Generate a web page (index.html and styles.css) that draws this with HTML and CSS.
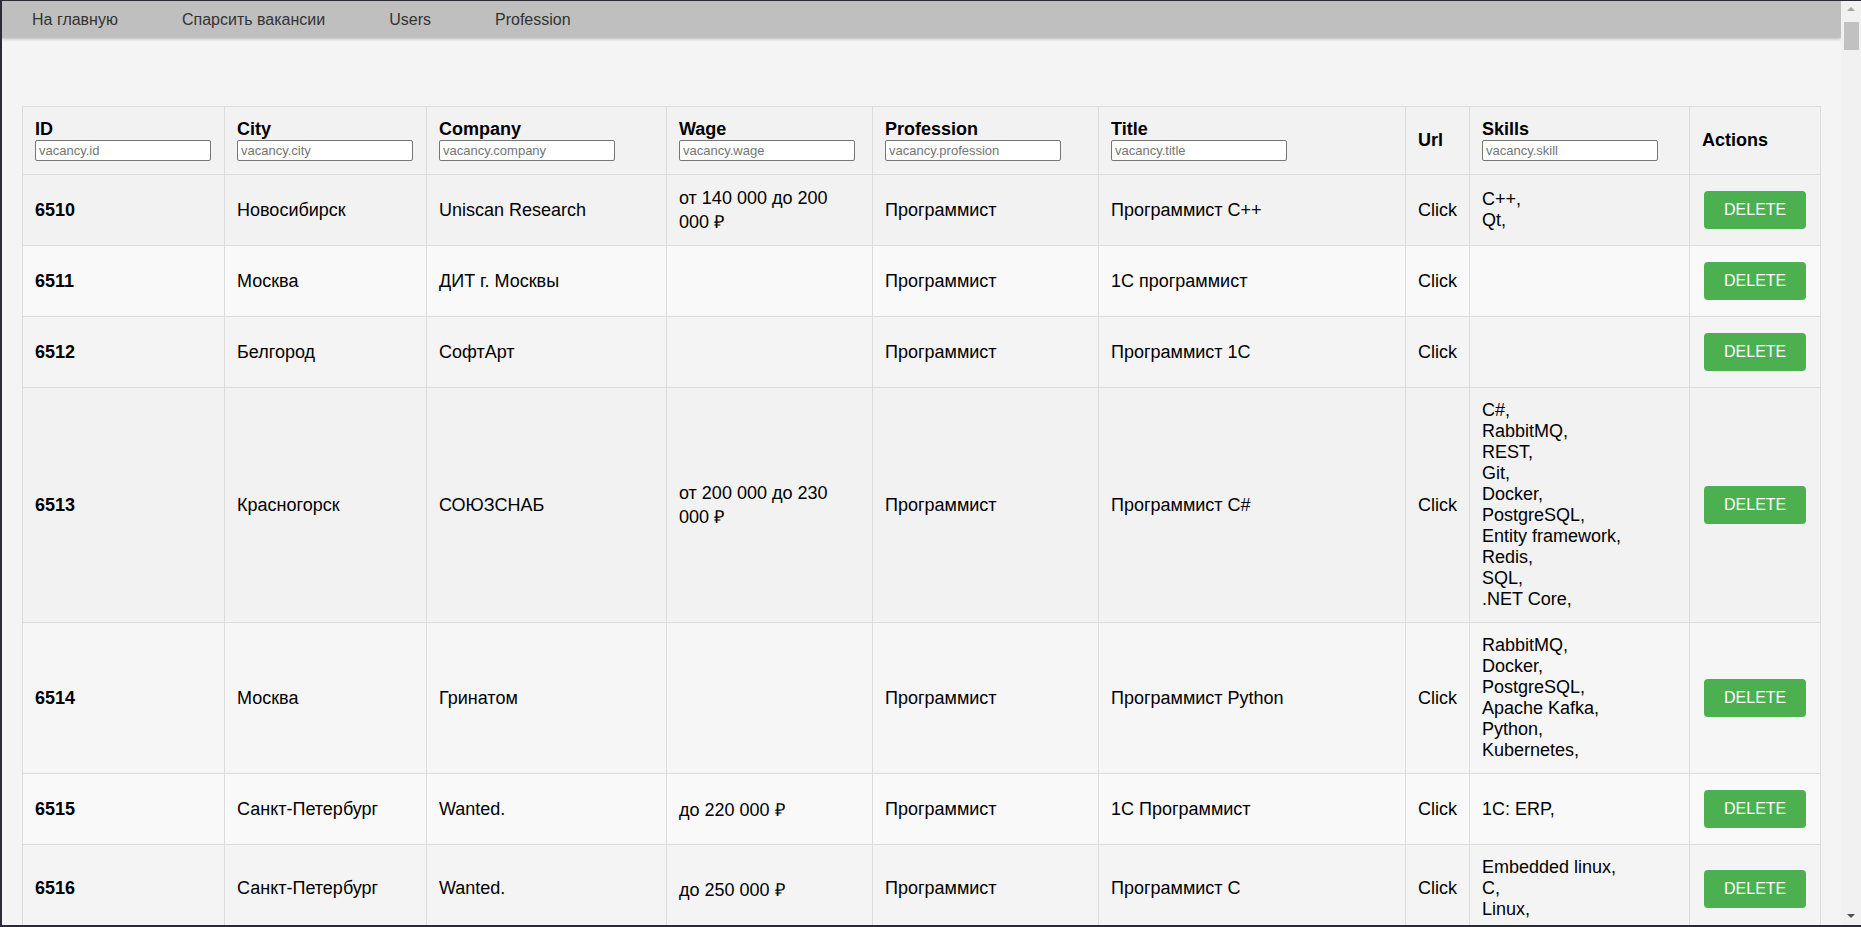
FILE: index.html
```html
<!DOCTYPE html>
<html lang="ru">
<head>
<meta charset="utf-8">
<title>Vacancies</title>
<link rel="stylesheet" href="styles.css">
</head>
<body>
<div class="frame">
  <div class="page">
    <nav class="nav">
      <a class="nav-link" href="#">На главную</a>
      <a class="nav-link" href="#">Спарсить вакансии</a>
      <a class="nav-link" href="#">Users</a>
      <a class="nav-link" href="#">Profession</a>
    </nav>
    <main class="content">
      <table class="grid">
        <colgroup>
          <col class="c-id"><col class="c-city"><col class="c-company"><col class="c-wage"><col class="c-prof"><col class="c-title"><col class="c-url"><col class="c-skills"><col class="c-actions">
        </colgroup>
        <thead>
          <tr>
            <th><div>ID</div><input class="filter" placeholder="vacancy.id"></th>
            <th><div>City</div><input class="filter" placeholder="vacancy.city"></th>
            <th><div>Company</div><input class="filter" placeholder="vacancy.company"></th>
            <th><div>Wage</div><input class="filter" placeholder="vacancy.wage"></th>
            <th><div>Profession</div><input class="filter" placeholder="vacancy.profession"></th>
            <th><div>Title</div><input class="filter" placeholder="vacancy.title"></th>
            <th>Url</th>
            <th><div>Skills</div><input class="filter" placeholder="vacancy.skill"></th>
            <th>Actions</th>
          </tr>
        </thead>
        <tbody>
          <tr class="r1">
            <td class="id">6510</td><td>Новосибирск</td><td>Uniscan Research</td><td class="wage">от 140 000 до 200 000 ₽</td><td>Программист</td><td>Программист C++</td><td><a class="url" href="#">Click</a></td>
            <td><span class="skill">C++,</span><span class="skill">Qt,</span></td>
            <td><button class="del">DELETE</button></td>
          </tr>
          <tr class="r2">
            <td class="id">6511</td><td>Москва</td><td>ДИТ г. Москвы</td><td class="wage"></td><td>Программист</td><td>1С программист</td><td><a class="url" href="#">Click</a></td>
            <td></td>
            <td><button class="del">DELETE</button></td>
          </tr>
          <tr class="r3">
            <td class="id">6512</td><td>Белгород</td><td>СофтАрт</td><td class="wage"></td><td>Программист</td><td>Программист 1С</td><td><a class="url" href="#">Click</a></td>
            <td></td>
            <td><button class="del">DELETE</button></td>
          </tr>
          <tr class="r4">
            <td class="id">6513</td><td>Красногорск</td><td>СОЮЗСНАБ</td><td class="wage">от 200 000 до 230 000 ₽</td><td>Программист</td><td>Программист C#</td><td><a class="url" href="#">Click</a></td>
            <td><span class="skill">C#,</span><span class="skill">RabbitMQ,</span><span class="skill">REST,</span><span class="skill">Git,</span><span class="skill">Docker,</span><span class="skill">PostgreSQL,</span><span class="skill">Entity framework,</span><span class="skill">Redis,</span><span class="skill">SQL,</span><span class="skill">.NET Core,</span></td>
            <td><button class="del">DELETE</button></td>
          </tr>
          <tr class="r5">
            <td class="id">6514</td><td>Москва</td><td>Гринатом</td><td class="wage"></td><td>Программист</td><td>Программист Python</td><td><a class="url" href="#">Click</a></td>
            <td><span class="skill">RabbitMQ,</span><span class="skill">Docker,</span><span class="skill">PostgreSQL,</span><span class="skill">Apache Kafka,</span><span class="skill">Python,</span><span class="skill">Kubernetes,</span></td>
            <td><button class="del">DELETE</button></td>
          </tr>
          <tr class="r6">
            <td class="id">6515</td><td>Санкт-Петербург</td><td>Wanted.</td><td class="wage">до 220 000 ₽</td><td>Программист</td><td>1С Программист</td><td><a class="url" href="#">Click</a></td>
            <td><span class="skill">1С: ERP,</span></td>
            <td><button class="del">DELETE</button></td>
          </tr>
          <tr class="r7">
            <td class="id">6516</td><td>Санкт-Петербург</td><td>Wanted.</td><td class="wage">до 250 000 ₽</td><td>Программист</td><td>Программист C</td><td><a class="url" href="#">Click</a></td>
            <td><span class="skill">Embedded linux,</span><span class="skill">C,</span><span class="skill">Linux,</span></td>
            <td><button class="del">DELETE</button></td>
          </tr>
        </tbody>
      </table>
    </main>
  </div>
  <div class="scrollbar">
    <div class="sb-arrow sb-up"></div>
    <div class="sb-thumb"></div>
    <div class="sb-track"></div>
    <div class="sb-arrow sb-down"></div>
  </div>
</div>
</body>
</html>
```
FILE: styles.css
```css
html, body {
  margin: 0;
  padding: 0;
  height: 100%;
  overflow: hidden;
}
body {
  font-family: "Liberation Sans", Arial, sans-serif;
  background: #2b2b35;
}
.frame {
  box-sizing: border-box;
  height: 100vh;
  border-top: 1px solid #2b2b35;
  border-left: 2px solid #2b2b35;
  border-bottom: 2px solid #2b2b35;
  display: flex;
}
.page {
  flex: 1;
  min-width: 0;
  overflow: hidden;
  background: #f4f4f4;
}
.nav {
  height: 37px;
  background: #bfbfbf;
  display: flex;
  align-items: center;
  box-shadow: 0 1px 3px rgba(0,0,0,0.25);
  position: relative;
}
.nav-link {
  font-size: 16px;
  color: #333;
  text-decoration: none;
  padding: 0 32px;
}
.nav-link:first-child {
  padding-left: 30px;
}
.content {
  padding: 68px 20px 0 20px;
}
.grid {
  table-layout: fixed;
  width: 1799px;
  border-collapse: collapse;
  border: 1px solid #dcdcdc;
  font-size: 18px;
  color: #000;
}
.c-id { width: 202px; }
.c-city { width: 202px; }
.c-company { width: 240px; }
.c-wage { width: 206px; }
.c-prof { width: 226px; }
.c-title { width: 307px; }
.c-url { width: 64px; }
.c-skills { width: 220px; }
.c-actions { width: 131px; }
.grid th, .grid td {
  border: 1px solid #dcdcdc;
  padding: 12px 12px;
  text-align: left;
  vertical-align: middle;
  line-height: normal;
}
.grid th {
  background: #f2f2f2;
  font-weight: bold;
  padding-bottom: 13px;
}
.grid td.id {
  font-weight: bold;
}
.grid td.wage {
  padding-right: 16px;
}
.filter {
  display: block;
  box-sizing: border-box;
  width: 176px;
  height: 21px;
  margin: 0;
  padding: 1px 3px;
  border: 1px solid #767676;
  border-radius: 2px;
  background: #fff;
  font-family: "Liberation Sans", Arial, sans-serif;
  font-size: 13px;
  color: #000;
}
.filter::placeholder {
  color: #757575;
}
.r1 td { background: #f2f2f2; }
.r2 td { background: #f9f9f9; }
.r3 td { background: #f4f4f4; }
.r4 td { background: #f2f2f2; }
.r5 td { background: #f6f6f6; }
.r6 td { background: #f9f9f9; }
.r7 td { background: #f4f4f4; }
.url {
  color: #000;
  text-decoration: none;
}
.skill {
  display: block;
}
.del {
  display: block;
  box-sizing: border-box;
  height: 38px;
  width: 102px;
  margin: 4px 2px;
  padding: 0 20px;
  border: none;
  border-radius: 4px;
  background: #4caf50;
  color: #fff;
  font-family: "Liberation Sans", Arial, sans-serif;
  font-size: 16px;
  line-height: 38px;
  cursor: pointer;
}
.scrollbar {
  width: 20px;
  flex: none;
  background: #f1f1f1;
  display: flex;
  flex-direction: column;
  align-items: center;
}
.sb-arrow {
  height: 17px;
  width: 17px;
  position: relative;
}
.sb-up::after, .sb-down::after {
  content: "";
  position: absolute;
  left: 4px;
  width: 0;
  height: 0;
  border-left: 4px solid transparent;
  border-right: 4px solid transparent;
}
.sb-up::after {
  top: 6px;
  border-bottom: 4px solid #a3a3a3;
}
.sb-down::after {
  top: 6px;
  border-top: 4px solid #505050;
}
.sb-thumb {
  width: 15px;
  height: 28px;
  margin-top: 4px;
  margin-left: 1px;
  background: #c1c1c1;
}
.sb-track {
  flex: 1;
}
```
